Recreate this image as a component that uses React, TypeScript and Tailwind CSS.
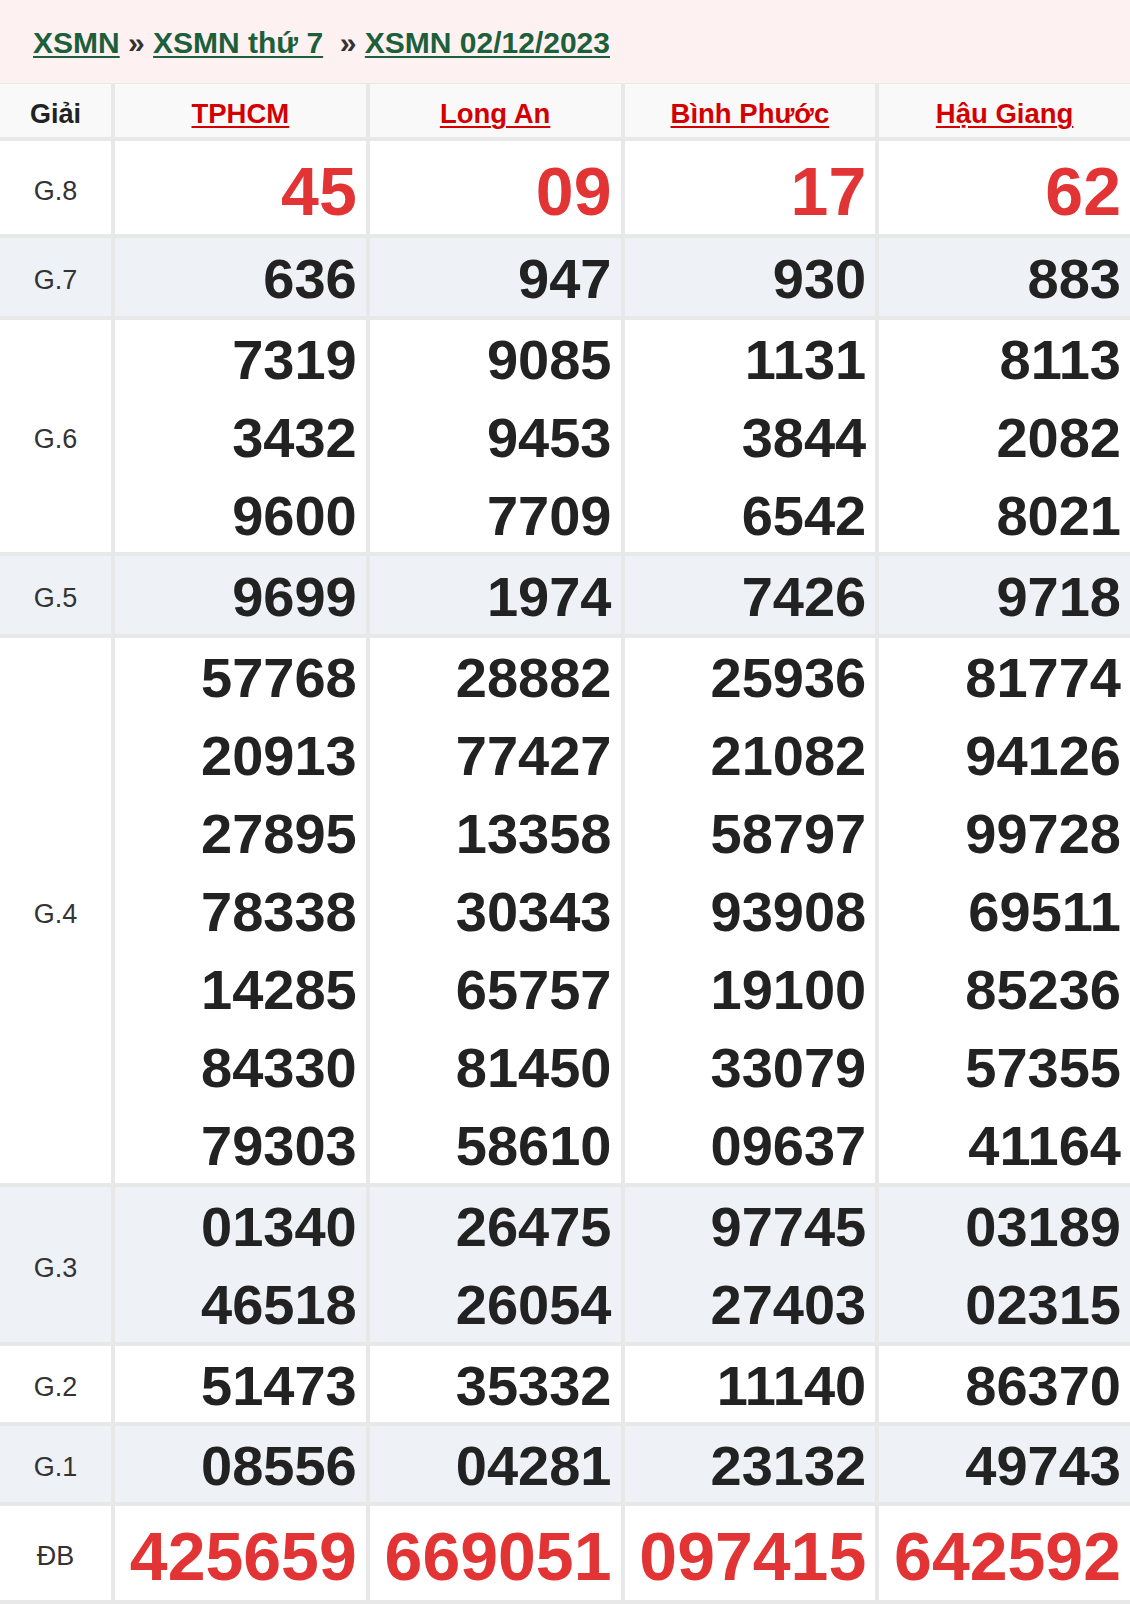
import React from "react";

type Row = {
  label: string;
  h: string;
  shaded: boolean;
  special?: boolean;
  values: string[][];
};

const rows: Row[] = [
  { label: "G.8", h: "h-[93px]", shaded: false, special: true, values: [["45"], ["09"], ["17"], ["62"]] },
  { label: "G.7", h: "h-[78px]", shaded: true, values: [["636"], ["947"], ["930"], ["883"]] },
  {
    label: "G.6",
    h: "h-[232px]",
    shaded: false,
    values: [
      ["7319", "3432", "9600"],
      ["9085", "9453", "7709"],
      ["1131", "3844", "6542"],
      ["8113", "2082", "8021"],
    ],
  },
  { label: "G.5", h: "h-[78px]", shaded: true, values: [["9699"], ["1974"], ["7426"], ["9718"]] },
  {
    label: "G.4",
    h: "h-[545px]",
    shaded: false,
    values: [
      ["57768", "20913", "27895", "78338", "14285", "84330", "79303"],
      ["28882", "77427", "13358", "30343", "65757", "81450", "58610"],
      ["25936", "21082", "58797", "93908", "19100", "33079", "09637"],
      ["81774", "94126", "99728", "69511", "85236", "57355", "41164"],
    ],
  },
  {
    label: "G.3",
    h: "h-[155px]",
    shaded: true,
    values: [
      ["01340", "46518"],
      ["26475", "26054"],
      ["97745", "27403"],
      ["03189", "02315"],
    ],
  },
  { label: "G.2", h: "h-[76px]", shaded: false, values: [["51473"], ["35332"], ["11140"], ["86370"]] },
  { label: "G.1", h: "h-[76px]", shaded: true, values: [["08556"], ["04281"], ["23132"], ["49743"]] },
  { label: "ĐB", h: "h-[94px]", shaded: false, special: true, values: [["425659"], ["669051"], ["097415"], ["642592"]] },
];

const provinces = ["TPHCM", "Long An", "Bình Phước", "Hậu Giang"];

export default function App() {
  return (
    <div
      className="w-[1130px] bg-white"
      style={{ fontFamily: '"Liberation Sans", Arial, sans-serif' }}
    >
      <div className="h-[83px] bg-[#fef1f1] flex items-center pl-[33px] pt-[2px] text-[30px] font-bold text-[#333]">
        <a className="text-[#1d5e3b] underline decoration-2 underline-offset-[3px]">XSMN</a>
        <span className="whitespace-pre"> » </span>
        <a className="text-[#1d5e3b] underline decoration-2 underline-offset-[3px]">XSMN thứ 7</a>
        <span className="whitespace-pre">{"  » "}</span>
        <a className="text-[#1d5e3b] underline decoration-2 underline-offset-[3px]">XSMN 02/12/2023</a>
      </div>
      <div className="grid grid-cols-[111px_repeat(4,minmax(0,1fr))] gap-[4px] bg-[#e8e8e8] pt-[1px] pb-[4px]">
        <div className="h-[53px] bg-[#f9f9f9] flex items-center justify-center pt-[7px] text-[27px] font-bold text-[#222]">
          Giải
        </div>
        {provinces.map((p) => (
          <div
            key={p}
            className="h-[53px] bg-[#f9f9f9] flex items-center justify-center pt-[7px] text-[27.5px] font-bold text-[#d40000]"
          >
            <a className="underline decoration-2 underline-offset-[3px]">{p}</a>
          </div>
        ))}
        {rows.map((r) => (
          <React.Fragment key={r.label}>
            <div
              className={`${r.h} ${r.shaded ? "bg-[#eef1f6]" : "bg-white"} flex items-center justify-center pt-[7px] text-[27px] text-[#333]`}
            >
              {r.label}
            </div>
            {r.values.map((col, i) => (
              <div
                key={i}
                className={`${r.h} ${r.shaded ? "bg-[#eef1f6]" : "bg-white"} flex flex-col justify-center items-end pr-[9px] ${r.special ? "pt-[6px]" : "pt-[3px]"}`}
              >
                {col.map((v, j) =>
                  r.special ? (
                    <div key={j} className="leading-[78px] text-[68px] font-bold text-[#e23434]">
                      {v}
                    </div>
                  ) : (
                    <div key={j} className="leading-[78px] text-[56px] font-bold text-[#222]">
                      {v}
                    </div>
                  )
                )}
              </div>
            ))}
          </React.Fragment>
        ))}
      </div>
    </div>
  );
}
